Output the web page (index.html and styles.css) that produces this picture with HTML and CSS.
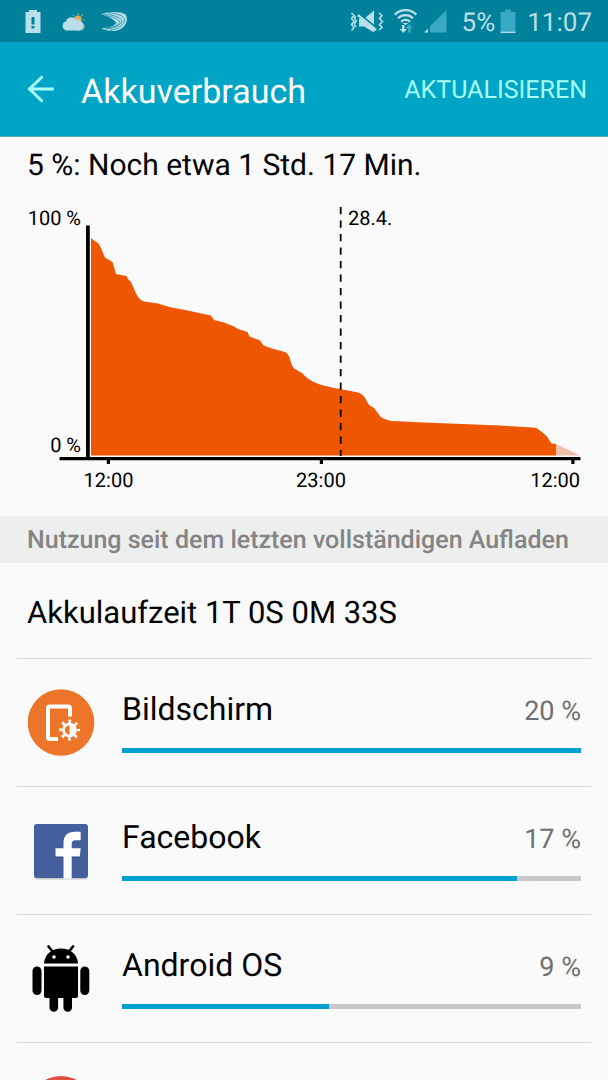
FILE: index.html
```html
<!DOCTYPE html>
<html lang="de">
<head>
<meta charset="utf-8">
<meta name="viewport" content="width=device-width, initial-scale=1">
<title>Akkuverbrauch</title>
<link rel="stylesheet" href="styles.css">
</head>
<body>
<div class="screen">
  <div class="status">
    <div class="status-group notices">
      <svg class="notice-icons" width="108" height="42" viewBox="24 0 108 42" role="img" aria-label="Akku schwach, Wetter, Tastatur">
        <path fill="#b9dfe8" fill-rule="evenodd" d="M29 10h8v2h3.500v21h-15V12H29zM31.500 17v7.500h3V17zM31.500 26v2.500h3V26z"/>
        <path stroke="#c5b07f" stroke-width="1" d="M78 13v2M73 14.500l1.500 2M83 14l-1.500 2M83 20.500l1.500-1"/>
        <circle cx="78" cy="19" r="3.600" fill="#e5af62"/>
        <path d="M77 30.500h4a4 4 0 0 0 1.500-7.500l-3 0z" fill="#a5adb0"/>
        <path d="M66.500 30.500a4.800 4.800 0 0 1-.4-9.300a5.600 5.600 0 0 1 10.300-1a5.200 5.200 0 0 1 3 10.300z" fill="#b9dfe8"/>
        <path fill="#b9dfe8" d="M101 14.300C108 11.300 121 11 125.500 14.500C130 21 123.500 31 113.500 31C108.500 31 104 29.800 101 28C107 28 113.500 27 116.500 23C113 18.500 108 16.500 101 14.300z"/>
        <path fill="none" stroke="#00819b" stroke-width=".7" d="M108 12.700C118 13.500 124 16 124.800 20C124 25.500 117 29.800 110 30.200M103 14.200C113 14.500 121 17.500 122.300 21C121 25.500 113 28.900 105 28.800M105 15.600C113 16.700 118.500 19 120 22.300C117.500 26 112 27.800 106 27.900"/>
      </svg>
    </div>
    <div class="status-group">
      <svg width="100" height="42" viewBox="348 0 100 42" role="img" aria-label="Vibration, WLAN, kein Mobilfunksignal">
        <g fill="none" stroke="#b9dfe8" stroke-width="1.500">
          <path d="M350.500 13l2.500 2.500-2.500 3 2.500 3-2.500 3 2.500 3-2.500 3M355 16l-1.700 2 2 3-2 3 1.700 3"/>
          <path d="M378 13l3 2.500-2.500 3 3 3-3 3 2.500 3-3 2.500"/>
        </g>
        <path fill="#b9dfe8" d="M373 10.500v15l-9-7.500zM358 18.500l3 0 13 10.500-1 3.500-10-6h-5z"/>
        <path stroke="#b9dfe8" stroke-width="2.400" d="M357 15l18 15"/>
        <path stroke="#00819b" stroke-width="1.200" d="M359 14.200l17 13.500"/>
        <g fill="none" stroke="#b9dfe8" stroke-width="2.300">
          <path d="M393.800 14.600a15 15 0 0 1 21.500 0M397 18.300a10.500 10.500 0 0 1 15 0M400.200 21.700a6.300 6.300 0 0 1 8.800 0"/>
        </g>
        <path fill="#b9dfe8" d="M401.500 23h6l-3 2zM401 25h2.500v4h2.500l-3.700 4-3.700-4h2.400z"/>
        <path fill="#3aa9c4" d="M408.300 24l4 4.500h-2.800v4H407v-4h-2.600z"/>
        <path fill="#3aa9c4" d="M445.500 10v22.500H429v-6.300z"/>
        <path fill="#b9dfe8" d="M427 28.500v4h-4z"/>
      </svg>
      <span class="status-text percent">5%</span>
      <svg width="16" height="42" viewBox="500 0 16 42" role="img" aria-label="Akku">
        <path fill="#3aa9c4" d="M505 9.500h6V12h4.500v20h-15V12h4.500z"/>
        <path fill="#b9dfe8" d="M500.500 31.700h15v1.300h-15z"/>
      </svg>
      <time class="status-text clock">11:07</time>
    </div>
  </div>

  <header class="appbar">
    <button class="back" type="button" aria-label="Zurück">
      <svg width="28" height="28" viewBox="0 0 28 28" fill="none" stroke="#a8fff6" stroke-width="3">
        <path d="M27 14H3M15.500 1.500L2.500 14l13 12.500"/>
      </svg>
    </button>
    <h1 class="title">Akkuverbrauch</h1>
    <button class="refresh" type="button">AKTUALISIEREN</button>
  </header>

  <main class="content">
    <p class="remaining">5 %: Noch etwa 1 Std. 17 Min.</p>
    <svg class="chart" viewBox="0 190 608 326" role="img" aria-label="Akkustand im Zeitverlauf">
      <path fill="#ee5602" d="M91 455.500V238L94 240.500L98 243L100 246L105 257.500L112.500 262L116 274L126.500 276L128 279L131 282L136 293.500Q139 300 144 301.500L158 303.500Q168 307 185 310L211 315.500L214 320L224 322.500L234 326.500L238 329L247.500 332L249.500 336.500L260 340.500L263.500 345.500L272 348.500L285 352Q289 354 290.500 361Q292 367 295 369L302 373Q308 380 316 383Q325 386.500 340 389L358 392.500Q363 394 365 398L369 405L374 408L380 416Q382 419 392 421L430 422.800L500 425.500L536 427.800L542 432L547 436.500L551.500 443.800H556V455.500z"/>
      <path fill="#f3bfa6" d="M556 444l24 11.500h-24z"/>
      <path stroke="#000" stroke-width="1.800" stroke-dasharray="7.300 6.200" d="M340.700 207v249"/>
      <path fill="#000" d="M86 225.500h3.800V457H580.500v3.300H574.500v3.700H571.300v-3.700H323v3.700h-3.200v-3.700H110v3.700h-3.200v-3.700H59.500V457H86z"/>
      <g class="chart-label">
        <text x="81" y="225" text-anchor="end">100 %</text>
        <text x="81" y="452" text-anchor="end">0 %</text>
        <text x="348" y="225">28.4.</text>
        <text x="108.500" y="487" text-anchor="middle">12:00</text>
        <text x="321" y="487" text-anchor="middle">23:00</text>
        <text x="580" y="487" text-anchor="end">12:00</text>
      </g>
    </svg>

    <h2 class="section">Nutzung seit dem letzten vollständigen Aufladen</h2>
    <p class="runtime">Akkulaufzeit 1T 0S 0M 33S</p>

    <ul class="usage">
      <li class="item">
        <svg class="icon" viewBox="0 0 67 67" aria-hidden="true">
          <circle cx="33" cy="33.500" r="33.300" fill="#ec7529"/>
          <path fill="none" stroke="#fff" stroke-width="4" d="M42 27.500V19q0-1.500-1.500-1.500H21.500q-1.500 0-1.500 1.500v29.500q0 1.500 1.500 1.500H30"/>
          <circle cx="41.500" cy="41" r="8.800" fill="none" stroke="#fff" stroke-width="3.400" stroke-dasharray="2.700 4.210" stroke-dashoffset="1.350"/>
          <circle cx="41.500" cy="41" r="6" fill="none" stroke="#fff" stroke-width="2.600"/>
          <path fill="#fff" d="M41.500 35a6 6 0 0 1 0 12z"/>
        </svg>
        <div class="details">
          <div class="line"><label class="name" for="use-display">Bildschirm</label><span class="value">20 %</span></div>
          <progress class="bar" id="use-display" max="100" value="100"></progress>
        </div>
      </li>
      <li class="item">
        <svg class="icon" viewBox="0 0 67 67" aria-hidden="true">
          <rect x="6" y="8" width="54" height="54.500" rx="3" fill="#c9c9cc"/>
          <rect x="6" y="7" width="54" height="54" rx="3" fill="#435f9c"/>
          <path fill="#37508a" d="M35.500 61V40.800h-8v-2H52l-.5 2H43.500V61z"/>
          <path fill="#fff" d="M35.500 61.500V39.500h-8v-8.300h8V26c0-7.500 4.500-11.200 11-11.200h6.200v8.400h-4.500c-3.500 0-4.500 1.500-4.500 4.200v3.800h9l-1 8.300h-8v22z"/>
        </svg>
        <div class="details">
          <div class="line"><label class="name" for="use-facebook">Facebook</label><span class="value">17 %</span></div>
          <progress class="bar" id="use-facebook" max="100" value="86"></progress>
        </div>
      </li>
      <li class="item">
        <svg class="icon" viewBox="0 0 67 67" aria-hidden="true">
          <path stroke="#000" stroke-width="2.600" stroke-linecap="round" d="M20.500 1.500l4.500 5.500M45 1.500l-4.500 5.500"/>
          <path d="M16 18.500C16.500 9 24 3.500 33 3.500s16.500 5.500 17 15z"/>
          <circle cx="26" cy="12" r="1.800" fill="#fafafa"/><circle cx="40" cy="12" r="1.800" fill="#fafafa"/>
          <path d="M16 21.500h34V51q0 2-2 2H44v9.500a4.300 4.300 0 0 1-8.600 0V53h-5.300v9.500a4.300 4.300 0 0 1-8.600 0V53H18q-2 0-2-2z"/>
          <rect x="4.500" y="21.500" width="9" height="28.500" rx="4.500"/><rect x="52.300" y="21.500" width="9" height="28.500" rx="4.500"/>
        </svg>
        <div class="details">
          <div class="line"><label class="name" for="use-android">Android OS</label><span class="value">9 %</span></div>
          <progress class="bar" id="use-android" max="100" value="45"></progress>
        </div>
      </li>
      <li class="item">
        <svg class="icon" viewBox="0 0 67 67" aria-hidden="true">
          <circle cx="33" cy="36.500" r="33.500" fill="#dc4f3e"/>
        </svg>
      </li>
    </ul>
  </main>
</div>
</body>
</html>
```
FILE: styles.css
```css
* {
  box-sizing: border-box;
}

body,
h1,
h2,
p,
ul {
  margin: 0;
  padding: 0;
}

body {
  background: #fafafa;
  color: #000;
  font-family: Roboto, "Noto Sans", sans-serif;
  text-rendering: geometricPrecision;
}

button {
  border: 0;
  padding: 0;
  background: none;
  color: #a8fff6;
  font-family: inherit;
  text-rendering: inherit;
}

svg {
  display: block;
  flex: none;
}

.screen {
  display: flex;
  flex-direction: column;
  height: 100vh;
}

.status {
  display: flex;
  flex: none;
  justify-content: space-between;
  height: 42px;
  padding: 0 16px 0 24px;
  background: #00819b;
}

.status-group {
  display: flex;
  align-items: center;
}

.status-text {
  color: #b9dfe8;
  font-size: 26px;
  line-height: 46px;
  padding-top: 4px;
}

.percent {
  margin: 0 5px 0 13px;
}

.clock {
  margin-left: 11px;
}

.appbar {
  display: flex;
  flex: none;
  align-items: center;
  height: 95px;
  padding: 0 21px 0 27px;
  background: #00a5c6;
  border-bottom: 1px solid #5fa9b8;
}

.title {
  flex: 1;
  margin-left: 26px;
  padding-top: 5px;
  color: #fff;
  font-size: 34px;
  font-weight: 400;
  line-height: 40px;
}

.refresh {
  padding-top: 4px;
  font-size: 25px;
  line-height: 32px;
}

.content {
  flex: 1;
  min-height: 0;
  overflow-y: auto;
  scrollbar-width: none;
}

.remaining {
  padding: 9px 27px 4px;
  font-size: 30px;
  line-height: 40px;
}

.chart {
  width: 100%;
  height: auto;
}

.chart-label {
  font-size: 20px;
}

.section {
  padding: 5px 27px 2px;
  background: #edefee;
  color: #848484;
  font-size: 25px;
  font-weight: 500;
  line-height: 40px;
}

.runtime {
  margin: 0 17px;
  padding: 30px 10px 25px;
  border-bottom: 1px solid #d8d8d8;
  font-size: 31px;
  line-height: 40px;
}

.usage {
  margin: 0 17px;
  list-style: none;
}

.item {
  display: flex;
  align-items: center;
  gap: 27px;
  height: 128px;
  padding: 0 10px 0 11px;
  border-bottom: 1px solid #d8d8d8;
}

.icon {
  width: 67px;
  height: 67px;
}

.details {
  flex: 1;
  padding-bottom: 4px;
}

.line {
  display: flex;
  justify-content: space-between;
  align-items: baseline;
  margin-bottom: 17px;
  line-height: 40px;
}

.name {
  font-size: 32px;
}

.value {
  color: #707070;
  font-size: 27px;
}

.bar {
  display: block;
  width: 100%;
  height: 5px;
  border: 0;
  background: #c8c8c8;
  appearance: none;
}

.bar::-webkit-progress-bar {
  background: #c8c8c8;
}

.bar::-webkit-progress-value {
  background: #00a0d2;
}

.bar::-moz-progress-bar {
  background: #00a0d2;
}
```
